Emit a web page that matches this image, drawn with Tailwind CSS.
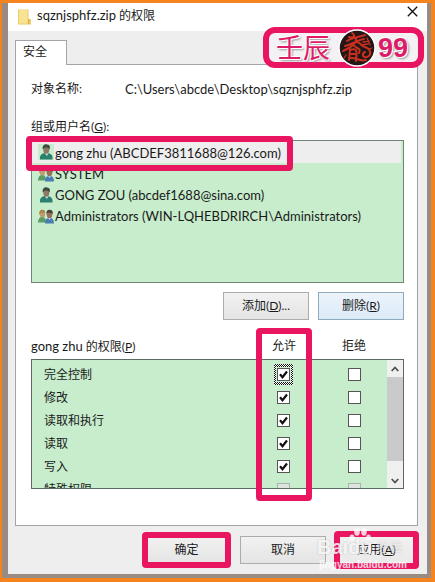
<!DOCTYPE html>
<html lang="zh-CN">
<head>
  <meta charset="UTF-8">
  <meta name="viewport" content="width=device-width, initial-scale=1">
  <title>sqznjsphfz.zip 的权限</title>
  <script src="https://cdn.jsdelivr.net/npm/@tailwindcss/browser@4"></script>
</head>
<body class="min-h-screen flex bg-[#f5841f] pt-[3px] pl-[2px] pr-1 pb-1 font-[Lato,'Noto_Sans_CJK_SC',sans-serif] text-[12px] leading-5 text-[#1a1a1a]">
  <!-- shared icons -->
  <svg class="hidden">
    <symbol id="user" viewBox="0 0 16 16">
      <path d="M2 15.500C1.500 11.500 3.500 9.500 6.500 9L11 9.200C14 10 15 12.500 14.500 15.500Z" fill="#2c8070"/>
      <path d="M6.500 9L9 12L10.500 9Z" fill="#cfe0d6"/>
      <ellipse cx="8.300" cy="5.500" rx="3" ry="4.200" fill="#8f7862"/>
      <path d="M4.800 5.500C4 1.500 6.500 0 9 .4C12 .5 12.500 3 11.500 5.500C11 3.500 8 4 6.800 3.500Z" fill="#3d4a42"/>
    </symbol>
    <symbol id="group" viewBox="0 0 16 16">
      <path d="M0 14.500C0 11 1.500 9 4 9C7 9 8 11 8 14.500Z" fill="#5a9d68"/>
      <ellipse cx="4.500" cy="6" rx="2.700" ry="3.500" fill="#c49a72"/>
      <path d="M1.500 7C.5 3 2.500 1.500 4.500 1.700C6.500 1.700 7.500 3.500 7.200 5C5.500 4 3.500 4.500 2.700 5Z" fill="#a5854a"/>
      <path d="M7 15.500C7 12 8.500 9.700 11.500 9.700C14.500 9.700 16 12 16 15.500Z" fill="#4a7db5"/>
      <path d="M10 9.700L11.500 12L13 9.700Z" fill="#d5e2ea"/>
      <ellipse cx="11.500" cy="6.500" rx="2.800" ry="3.700" fill="#96705a"/>
      <path d="M8.500 6C8 2.800 10 1.500 12 1.800C14.500 2 15.300 4 14.500 6.300C13.500 4.500 11 5 10 4.500Z" fill="#4a4038"/>
    </symbol>
    <symbol id="tick" viewBox="0 0 13 13">
      <path d="M3 6.200L5.500 9.200L10 3.500" fill="none" stroke="#111" stroke-width="2.200"/>
    </symbol>
  </svg>

  <div class="flex-1 flex bg-[#978b84] pl-[6px] pr-1 pb-1">
    <main class="relative flex-1 flex flex-col bg-[#efeeef] pb-[10px]">

      <header class="flex items-center h-7 bg-white pl-[10px] pr-[9px]">
        <svg class="w-[13px] h-4" viewBox="0 0 13 16">
          <path d="M0 .5H10.500V10H13V15.500H0Z" fill="#eccb65"/>
          <path d="M1 1H9.500V14.500H1Z" fill="#f8e294"/>
          <path d="M10.500 10V15" stroke="#d9b34d"/>
        </svg>
        <h1 class="flex-1 ml-[6px] pb-1"><span class="text-[13px]">sqznjsphfz.zip</span> 的权限</h1>
        <button type="button" aria-label="关闭" class="pb-3">
          <svg class="w-[11px] h-[11px]" viewBox="0 0 11 11"><path d="M.8.8L10.200 10.200M10.200.8L.8 10.200" stroke="#111" stroke-width="1.300"/></svg>
        </button>
      </header>

      <div class="absolute right-[3px] top-6 flex items-center w-[161px] h-[41px] border-6 border-[#ea1560] rounded-xl bg-[#f3f1f3] pl-[7px]">
        <span class="text-[27px] leading-7 text-[#dc1c68] [text-shadow:1px_1px_0_#fff,-1px_-1px_0_#fff,2px_2px_2px_#999]">壬辰</span>
        <svg class="w-[38px] h-[38px] ml-[8px] -my-1 shrink-0" viewBox="0 0 38 38">
          <circle cx="19" cy="19" r="18" fill="#241716" stroke="#fff" stroke-width="1.500"/>
          <g fill="none" stroke="#c9301f" stroke-width="2" stroke-linecap="round">
            <path d="M14 4C19 8 14 9 11 8M9 12C14 8 22 8 27 6M7 17C15 15 19 11 26 10M18 9C19 14 12 19 5 22"/>
            <path d="M18 13C22 12 22 17 27 18C33 20 34 26 29 28C25 29 23 25 27 23"/>
            <path d="M16 17C21 20 23 20 21 24M12 20L11 31M12 21C20 18 19 23 18 32M12 25H18M12 29C18 28 22 33 28 31"/>
            <path d="M25 13L31 12M23 16L30 15M8 26L6 29M29 9L32 16M31 20L34 19" stroke-width="1.300"/>
          </g>
        </svg>
        <span class="text-[27px] leading-7 font-bold text-[#dc1c68] font-['Liberation_Sans',sans-serif] ml-[2px] [text-shadow:1px_1px_0_#fff,-1px_-1px_0_#fff,2px_2px_2px_#999]">99</span>
      </div>

      <div class="flex px-[7px] pt-[9px]">
        <button type="button" class="relative -mb-px w-[52px] h-[25px] border border-b-0 border-[#a3a4aa] bg-white pb-[2px] pr-3">安全</button>
      </div>

      <section class="mx-[7px] mr-[9px] flex-1 border border-[#a3a4aa] bg-white px-[15px] pr-[13px] pt-[14px] pb-9">
        <div class="flex">
          <span class="w-[94px]">对象名称:</span>
          <span class="text-[13px]">C:\Users\abcde\Desktop\sqznjsphfz.zip</span>
        </div>

        <h2 id="users" class="mt-[18px]">组或用户名(<u>G</u>):</h2>
        <ul aria-labelledby="users" class="mt-[3px] h-[143px] border border-[#6f8575] bg-[#c7edcd] text-[13px]">
          <li class="relative z-10 h-[22px] bg-[#efeeef] mr-[2px]">
            <div class="relative flex items-center w-fit h-full pl-[6px]">
              <svg class="w-4 h-4 mr-px bg-[#c7edcd]"><use href="#user"/></svg>
              <span class="pt-[2px]">gong zhu (ABCDEF3811688@126.com)</span>
              <div class="absolute -left-[6px] -right-[12px] -top-[5px] -bottom-[8px] border-6 border-[#ea1560] rounded-sm pointer-events-none"></div>
            </div>
          </li>
          <li class="flex items-center h-[21px] pl-[6px]"><svg class="w-4 h-4 mr-px"><use href="#group"/></svg>SYSTEM</li>
          <li class="flex items-center h-[21px] pl-[6px]"><svg class="w-4 h-4 mr-px"><use href="#user"/></svg>GONG ZOU (abcdef1688@sina.com)</li>
          <li class="flex items-center h-[21px] pl-[6px]"><svg class="w-4 h-4 mr-px"><use href="#group"/></svg>Administrators (WIN-LQHEBDRIRCH\Administrators)</li>
        </ul>

        <div class="flex justify-end gap-[9px] mt-[9px]">
          <button type="button" class="w-[86px] h-7 border border-[#acacac] bg-linear-to-b from-[#f1f1f1] to-[#e4e4e4]">添加(<u>D</u>)...</button>
          <button type="button" class="w-[86px] h-7 border border-[#8eabbd] bg-linear-to-b from-[#ecf4fb] to-[#dceaf7]">删除(<u>R</u>)</button>
        </div>

        <div class="relative mt-4">
          <div class="flex h-[23px] pr-[18px]">
            <h2 class="flex-1"><span class="text-[13px]">gong zhu</span> 的权限(<u>P</u>)</h2>
            <span class="w-[76px] text-center">允许</span>
            <span class="w-16 text-center">拒绝</span>
          </div>
          <div class="flex h-[130px] overflow-hidden border border-[#5c6a60] bg-[#c7edcd]">
            <div class="flex-1 pt-[3px]">
              <table class="w-full table-fixed">
                <colgroup><col><col class="w-[76px]"><col class="w-[66px]"></colgroup>
                <tbody>
                  <tr class="h-[23px]">
                    <th class="pl-3 text-left font-normal">完全控制</th>
                    <td>
                      <div class="flex items-center justify-center w-[19px] h-[21px] mx-auto bg-[repeating-conic-gradient(#111_0_25%,#fff_0_50%)] bg-[length:2px_2px]">
                        <label class="relative flex items-center justify-center w-[15px] h-[15px] bg-[#c7edcd]"><input type="checkbox" checked aria-label="完全控制 允许" class="appearance-none w-[13px] h-[13px] border border-[#555] bg-white"><svg class="absolute w-[13px] h-[13px]"><use href="#tick"/></svg></label>
                      </div>
                    </td>
                    <td><input type="checkbox" aria-label="完全控制 拒绝" class="block mx-auto appearance-none w-[13px] h-[13px] border border-[#555] bg-white"></td>
                  </tr>
                  <tr class="h-[23px]">
                    <th class="pl-3 text-left font-normal">修改</th>
                    <td><label class="relative block w-[13px] mx-auto"><input type="checkbox" checked aria-label="修改 允许" class="block appearance-none w-[13px] h-[13px] border border-[#555] bg-white"><svg class="absolute inset-0 w-[13px] h-[13px]"><use href="#tick"/></svg></label></td>
                    <td><input type="checkbox" aria-label="修改 拒绝" class="block mx-auto appearance-none w-[13px] h-[13px] border border-[#555] bg-white"></td>
                  </tr>
                  <tr class="h-[23px]">
                    <th class="pl-3 text-left font-normal">读取和执行</th>
                    <td><label class="relative block w-[13px] mx-auto"><input type="checkbox" checked aria-label="读取和执行 允许" class="block appearance-none w-[13px] h-[13px] border border-[#555] bg-white"><svg class="absolute inset-0 w-[13px] h-[13px]"><use href="#tick"/></svg></label></td>
                    <td><input type="checkbox" aria-label="读取和执行 拒绝" class="block mx-auto appearance-none w-[13px] h-[13px] border border-[#555] bg-white"></td>
                  </tr>
                  <tr class="h-[23px]">
                    <th class="pl-3 text-left font-normal">读取</th>
                    <td><label class="relative block w-[13px] mx-auto"><input type="checkbox" checked aria-label="读取 允许" class="block appearance-none w-[13px] h-[13px] border border-[#555] bg-white"><svg class="absolute inset-0 w-[13px] h-[13px]"><use href="#tick"/></svg></label></td>
                    <td><input type="checkbox" aria-label="读取 拒绝" class="block mx-auto appearance-none w-[13px] h-[13px] border border-[#555] bg-white"></td>
                  </tr>
                  <tr class="h-[23px]">
                    <th class="pl-3 text-left font-normal">写入</th>
                    <td><label class="relative block w-[13px] mx-auto"><input type="checkbox" checked aria-label="写入 允许" class="block appearance-none w-[13px] h-[13px] border border-[#555] bg-white"><svg class="absolute inset-0 w-[13px] h-[13px]"><use href="#tick"/></svg></label></td>
                    <td><input type="checkbox" aria-label="写入 拒绝" class="block mx-auto appearance-none w-[13px] h-[13px] border border-[#555] bg-white"></td>
                  </tr>
                  <tr class="h-[23px]">
                    <th class="pl-3 text-left font-normal">特殊权限</th>
                    <td><input type="checkbox" disabled aria-label="特殊权限 允许" class="block mx-auto appearance-none w-[13px] h-[13px] border border-[#a9b5ab] bg-[#dde3de]"></td>
                    <td><input type="checkbox" disabled aria-label="特殊权限 拒绝" class="block mx-auto appearance-none w-[13px] h-[13px] border border-[#a9b5ab] bg-[#dde3de]"></td>
                  </tr>
                </tbody>
              </table>
            </div>
            <div class="flex flex-col w-4 bg-[#f0f0f0]">
              <button type="button" aria-label="向上滚动" class="h-[17px] flex items-center justify-center">
                <svg class="w-2 h-[6px]" viewBox="0 0 8 6"><path d="M.7 5L4 1.500L7.300 5" fill="none" stroke="#505050" stroke-width="1.800"/></svg>
              </button>
              <div class="flex-1 bg-[#cacacc]"></div>
              <button type="button" aria-label="向下滚动" class="h-[27px] flex items-center justify-center pt-3">
                <svg class="w-2 h-[6px]" viewBox="0 0 8 6"><path d="M.7 1L4 4.500L7.300 1" fill="none" stroke="#505050" stroke-width="1.800"/></svg>
              </button>
            </div>
          </div>
          <div class="absolute right-[92px] -top-2 -bottom-3 w-14 border-6 border-[#ea1560] rounded-sm pointer-events-none"></div>
        </div>
      </section>

      <footer class="flex justify-end gap-[9px] mt-[10px] pr-[14px]">
        <div class="relative">
          <button type="button" class="block w-[77px] h-7 bg-linear-to-b from-[#f1f1f1] to-[#e4e4e4]">确定</button>
          <div class="absolute -inset-x-[6px] -inset-y-1 border-6 border-[#ea1560] rounded-sm pointer-events-none"></div>
        </div>
        <button type="button" class="ml-[6px] w-[86px] h-7 border border-[#acacac] bg-linear-to-b from-[#f1f1f1] to-[#e4e4e4]">取消</button>
        <div class="relative ml-[5px]">
          <button type="button" class="block w-[73px] h-7 bg-linear-to-b from-[#f1f1f1] to-[#e9e9e9]">应用(<u>A</u>)</button>
          <div class="absolute -inset-x-[6px] -inset-y-[5px] border-6 border-[#ea1560] rounded-sm pointer-events-none"></div>
        </div>
      </footer>

      <!-- site watermark -->
      <div class="absolute right-[20px] bottom-[3px] w-[90px] text-white/80 pointer-events-none font-['Liberation_Sans','Noto_Sans_CJK_SC',sans-serif]">
        <svg class="absolute left-[32px] -top-[7px] w-[22px] h-[19px]" viewBox="0 0 22 19" fill="#fff" fill-opacity=".8">
          <ellipse cx="3" cy="9.500" rx="2.500" ry="3"/><ellipse cx="8" cy="4" rx="2.800" ry="3.700"/><ellipse cx="15" cy="4" rx="2.800" ry="3.700"/><ellipse cx="19.500" cy="9.500" rx="2.300" ry="3"/>
        </svg>
        <div class="flex items-center h-6 text-[20px] font-bold [text-shadow:0_0_2px_#0003]"><span>Bai</span><span>du</span><span class="ml-1 text-[13px] font-normal text-white/60">经验</span></div>
        <div class="text-[10px] leading-3 text-right font-bold">jingyan.baidu.com</div>
      </div>
    </main>
  </div>
</body>
</html>
